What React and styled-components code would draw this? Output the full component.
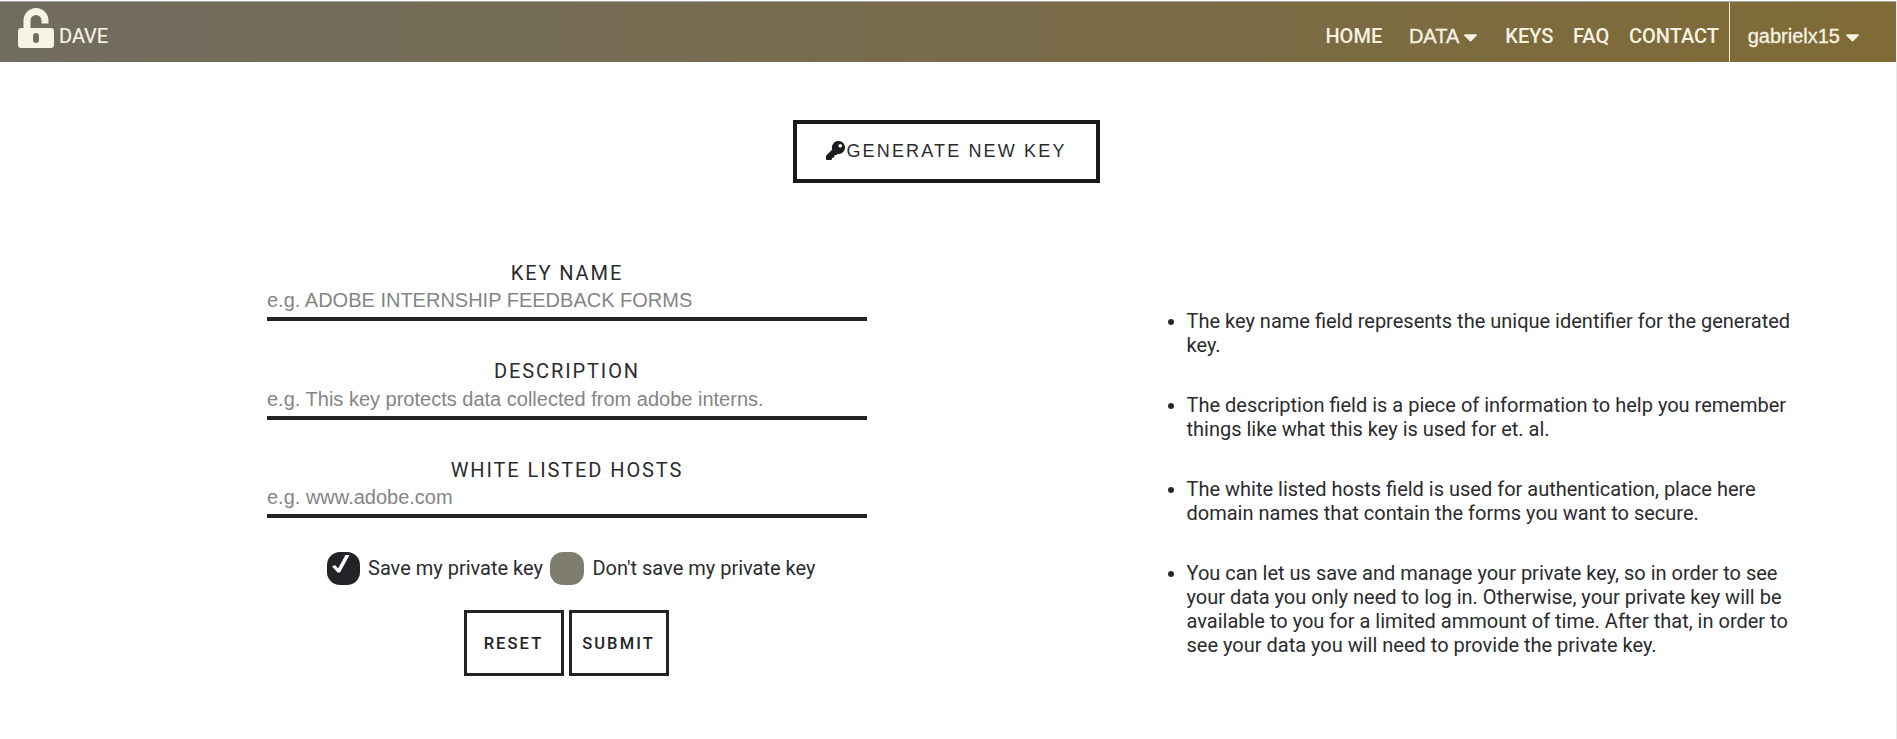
import React from "react";
import styled, { createGlobalStyle } from "styled-components";
import { FaCaretDown, FaKey } from "react-icons/fa";

const GlobalStyle = createGlobalStyle`
  *, *::before, *::after { box-sizing: border-box; }
  body { margin: 0; background: #fff; color: #2b2b2e; font: 20px/24px Roboto, sans-serif; overflow: hidden; }
  button, input { font-family: "Liberation Sans", Arial, sans-serif; }
`;

const Page = styled.div`
  height: 739px;
  border-top: 1px solid #fdfdfd;
  border-right: 1px solid #e8e8e8;
`;

const Header = styled.header`
  display: flex;
  justify-content: space-between;
  height: 61px;
  border-top: 1px solid #a5a5a8;
  background: linear-gradient(to right, #706c60, #806b36);
  color: #f7f3e3;
`;

const Brand = styled.a`
  display: flex;
  align-items: flex-start;
  padding: 6px 0 0 18.3px;
  gap: 4.7px;
`;

const BrandName = styled.span`
  padding-top: 16px;
  -webkit-text-stroke: 0.2px currentColor;
`;

const Nav = styled.nav`
  display: flex;
  align-items: stretch;
`;

const NavLink = styled.a`
  padding: 22px 9.7px 0 10px;
  font-weight: 500;
`;

const NavButton = styled.button`
  display: flex;
  align-items: flex-start;
  gap: 4px;
  padding: 22px 17px 0;
  border: 0;
  background: none;
  color: inherit;
  font-size: 20px;
  line-height: 24px;
  -webkit-text-stroke: 0.3px currentColor;
  svg { width: 15px; height: 22px; margin-top: 2px; }
`;

const UserButton = styled(NavButton)`
  gap: 5px;
  padding: 22px 36px 0 18px;
  border-left: 1px solid #f7f3e3;
`;

const GenerateRow = styled.div`
  display: flex;
  justify-content: center;
  padding: 58px 3px 0 0;
`;

const GenerateButton = styled.button`
  display: flex;
  align-items: center;
  justify-content: center;
  width: 307px;
  height: 63px;
  padding: 0;
  border: 4px solid #1a1a1b;
  background: #fff;
  color: #2b2b2e;
  font-size: 18px;
  letter-spacing: 2.15px;
  svg { width: 19px; height: 19px; margin-right: 1px; color: #1a1a1b; position: relative; top: -1px; }
`;

const Content = styled.main`
  display: flex;
  align-items: flex-start;
  padding: 77.9px 0 0 267px;
`;

const Form = styled.form`
  display: flex;
  flex-direction: column;
  width: 600px;
`;

const Field = styled.label`
  display: flex;
  flex-direction: column;
  height: 60.2px;
  margin-bottom: 38.3px;
`;

const FieldLabel = styled.span`
  text-align: center;
  letter-spacing: 1.9px;
`;

const FieldInput = styled.input`
  height: 36.2px;
  padding: 4px 0 4.1px;
  border: 0;
  border-bottom: 4px solid #222326;
  background: transparent;
  font-size: 20px;
  &::placeholder { color: #858585; opacity: 1; }
`;

const Options = styled.div`
  display: flex;
  padding-left: 60px;
  margin-top: -4.4px;
`;

const Option = styled.label`
  display: flex;
  align-items: center;
  gap: 8px;
  margin-right: 7.5px;
  white-space: nowrap;
`;

const CheckBox = styled.span`
  display: flex;
  flex: none;
  width: ${(p) => (p.$checked ? "33px" : "34px")};
  height: 33px;
  border-radius: 13px;
  background: ${(p) => (p.$checked ? "#222326" : "#7f7c70")};
`;

const Actions = styled.div`
  display: flex;
  justify-content: center;
  gap: 5px;
  margin-top: 25px;
  padding-right: 2px;
`;

const ActionButton = styled.button`
  width: 100px;
  height: 66px;
  padding: 1px 0 0;
  border: 3px solid #222326;
  background: #fff;
  color: #222326;
  font: 500 16.5px Roboto, sans-serif;
  letter-spacing: 2.1px;
`;

const Notes = styled.ul`
  width: 620px;
  margin: 48px 0 0 319.5px;
  padding: 0;
`;

const Note = styled.li`
  margin-bottom: 36px;
`;

const LockIcon = () => (
  <svg width="36" height="41" viewBox="0 0 36 41" fill="none">
    <path d="M9 21V12.5a9 9 0 0 1 18 0V15.5" stroke="currentColor" strokeWidth="7" />
    <path
      fill="currentColor"
      fillRule="evenodd"
      d="M3 20H33Q36 20 36 23V37Q36 40 33 40H3Q0 40 0 37V23Q0 20 3 20ZM18 25Q15 25 15 28V32Q15 35 18 35Q21 35 21 32V28Q21 25 18 25Z"
    />
  </svg>
);

const CheckMark = () => (
  <svg width="33" height="33" viewBox="0 0 33 33">
    <path d="M5 14.5L8 13L11 16.5L18.5 3H22.5L13 20.5H10.5Z" fill="#fff" />
  </svg>
);

const fields = [
  ["KEY NAME", "e.g. ADOBE INTERNSHIP FEEDBACK FORMS"],
  ["DESCRIPTION", "e.g. This key protects data collected from adobe interns."],
  ["WHITE LISTED HOSTS", "e.g. www.adobe.com"],
];

const notes = [
  "The key name field represents the unique identifier for the generated key.",
  "The description field is a piece of information to help you remember things like what this key is used for et. al.",
  "The white listed hosts field is used for authentication, place here domain names that contain the forms you want to secure.",
  "You can let us save and manage your private key, so in order to see your data you only need to log in. Otherwise, your private key will be available to you for a limited ammount of time. After that, in order to see your data you will need to provide the private key.",
];

export default function App() {
  return (
    <Page>
      <GlobalStyle />
      <Header>
        <Brand>
          <LockIcon />
          <BrandName>DAVE</BrandName>
        </Brand>
        <Nav>
          <NavLink>HOME</NavLink>
          <NavButton>DATA<FaCaretDown /></NavButton>
          <NavLink>KEYS</NavLink>
          <NavLink>FAQ</NavLink>
          <NavLink>CONTACT</NavLink>
          <UserButton>gabrielx15<FaCaretDown /></UserButton>
        </Nav>
      </Header>
      <GenerateRow>
        <GenerateButton type="button"><FaKey />GENERATE NEW KEY</GenerateButton>
      </GenerateRow>
      <Content>
        <Form>
          {fields.map(([label, hint]) => (
            <Field key={label}>
              <FieldLabel>{label}</FieldLabel>
              <FieldInput placeholder={hint} />
            </Field>
          ))}
          <Options>
            <Option><CheckBox $checked><CheckMark /></CheckBox>Save my private key</Option>
            <Option><CheckBox />Don't save my private key</Option>
          </Options>
          <Actions>
            <ActionButton type="reset">RESET</ActionButton>
            <ActionButton type="button">SUBMIT</ActionButton>
          </Actions>
        </Form>
        <Notes>
          {notes.map((text) => <Note key={text}>{text}</Note>)}
        </Notes>
      </Content>
    </Page>
  );
}
